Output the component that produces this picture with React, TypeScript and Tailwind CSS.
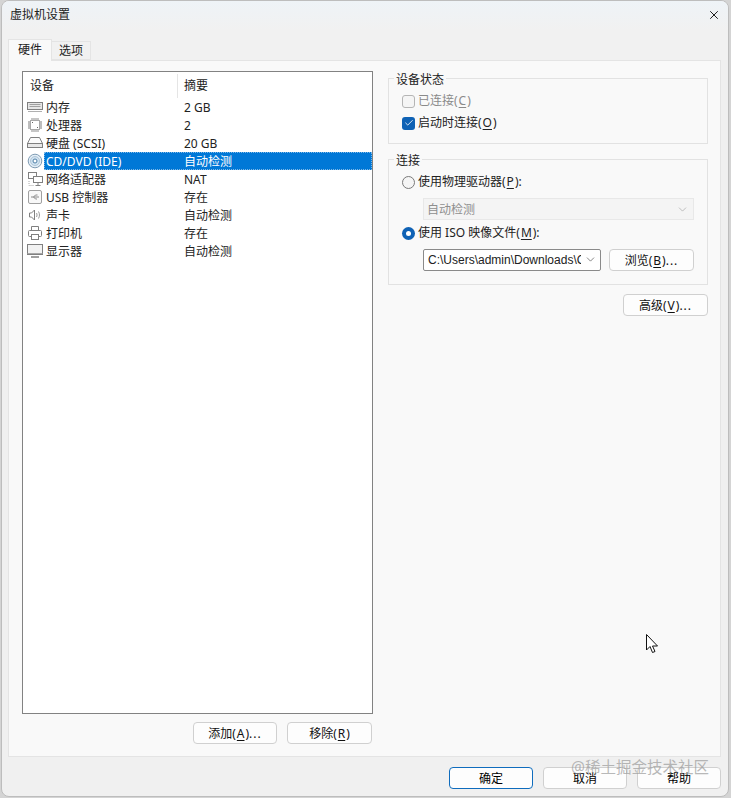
import { ChevronDown, Check, X } from "lucide-react";
import type { ReactNode } from "react";

const FONT = "font-['Noto_Sans','Noto_Sans_CJK_SC','Liberation_Sans',sans-serif]";

const devices = [
  { icon: "memory", name: "内存", summary: "2 GB" },
  { icon: "cpu", name: "处理器", summary: "2" },
  { icon: "disk", name: "硬盘 (SCSI)", summary: "20 GB" },
  { icon: "cd", name: "CD/DVD (IDE)", summary: "自动检测" },
  { icon: "network", name: "网络适配器", summary: "NAT" },
  { icon: "usb", name: "USB 控制器", summary: "存在" },
  { icon: "sound", name: "声卡", summary: "自动检测" },
  { icon: "printer", name: "打印机", summary: "存在" },
  { icon: "display", name: "显示器", summary: "自动检测" },
];

function DeviceIcon({ kind }: { kind: string }) {
  return (
    <svg width="16" height="16" viewBox="0 0 16 16" fill="none" stroke="#808080" strokeWidth="1">
      {kind === "memory" && (
        <>
          <rect x="0.500" y="3.500" width="15" height="7" fill="#e6e6e6" />
          <path d="M2.500 5.500h11M2.500 7.500h11" stroke="#a0a0a0" />
          <path d="M1 12.500h14" stroke="#b0b0b0" />
        </>
      )}
      {kind === "cpu" && (
        <>
          <rect x="3.500" y="3.500" width="9" height="9" fill="#fff" stroke="#a8a8a8" />
          <path d="M5 5.500h1M10 10.500h1" stroke="#666" />
          <path d="M1 5h2M1 7h2M1 9h2M1 11h2M13 5h2M13 7h2M13 9h2M13 11h2M5 1v2M7 1v2M9 1v2M11 1v2M5 13v2M7 13v2M9 13v2M11 13v2" stroke="#a8a8a8" strokeWidth="1.300" />
        </>
      )}
      {kind === "disk" && (
        <>
          <path d="M3.500 2.500h9l3 6H0.500z" fill="#fbfbfb" />
          <rect x="0.500" y="8.500" width="15" height="4" fill="#e8e8e8" />
        </>
      )}
      {kind === "cd" && (
        <>
          <circle cx="8" cy="8" r="6.800" fill="#e4eef6" stroke="#7f9bb3" />
          <circle cx="8" cy="8" r="4.500" fill="#cfe2f1" stroke="#b0c6d8" />
          <circle cx="8" cy="8" r="2" fill="#fff" stroke="#4f7fa6" />
        </>
      )}
      {kind === "network" && (
        <>
          <path d="M2 10v4.500h5" stroke="#a8a8a8" strokeDasharray="1 1" />
          <rect x="1.500" y="1.500" width="8" height="6" fill="#fff" />
          <rect x="6.500" y="5.500" width="9" height="6" fill="#fff" />
          <path d="M11 12v2M8.500 14.500h5" />
        </>
      )}
      {kind === "usb" && (
        <>
          <rect x="1.500" y="1.500" width="13" height="13" rx="1.500" fill="#f8f8f8" stroke="#a0a0a0" />
          <path d="M4 8h8M6.500 8l2-2h2M6.500 8l2 2h1.500" stroke="#8a8a8a" />
        </>
      )}
      {kind === "sound" && (
        <>
          <path d="M2.500 6v4h2l3 3V3l-3 3z" fill="#fff" />
          <path d="M9.500 6c.7 1.300.7 2.700 0 4M11.500 4.500c1.300 2.300 1.300 4.700 0 7" stroke="#9a9a9a" />
        </>
      )}
      {kind === "printer" && (
        <>
          <path d="M4.500 5V1.500h7V5" />
          <rect x="1.500" y="5.500" width="13" height="6" rx="1" fill="#fff" />
          <rect x="4.500" y="9.500" width="7" height="5" fill="#fff" />
        </>
      )}
      {kind === "display" && (
        <>
          <rect x="0.500" y="1.500" width="15" height="10" fill="#f2f2f2" />
          <path d="M0.500 10.500h15" stroke="#a8a8a8" />
          <path d="M4 14h8" strokeWidth="1.500" />
        </>
      )}
    </svg>
  );
}

function Button({ children, primary, className }: { children: ReactNode; primary?: boolean; className?: string }) {
  return (
    <button
      className={`flex h-[22px] items-center justify-center rounded-[4px] border bg-[#fdfdfd] pt-[2px] text-[12px] text-[#111] ${
        primary ? "border-[#0f6cbd]" : "border-[#d0d0d0]"
      } ${className ?? ""}`}
    >
      <span>{children}</span>
    </button>
  );
}

function Group({ title, className, children }: { title: string; className: string; children: ReactNode }) {
  return (
    <div className={`relative border border-[#e2e2e2] ${className}`}>
      <span className="absolute left-[5px] top-[-8px] bg-[#f9f9f9] px-[2px] text-[12px] leading-[18px] text-[#222]">{title}</span>
      {children}
    </div>
  );
}

function Key({ children }: { children: string }) {
  return <span className="mx-px underline underline-offset-2">{children}</span>;
}

function Dots() {
  return <span className="tracking-[1px]">...</span>;
}

export default function App() {
  return (
    <div className="flex h-[798px] w-[731px] bg-[#d4d4d4] pb-px pl-px pr-[2px]">
      <div className={`${FONT} relative flex flex-1 flex-col overflow-hidden rounded-lg border border-[#bdbdbd] bg-[#f0f0f0]`}>
        <div className="flex h-[29px] shrink-0 items-center justify-between bg-gradient-to-b from-[#eef3f7] to-[#f1f1f1] pb-[2px] pl-[8px] pr-[7px]">
          <span className="text-[12px] text-[#222]">虚拟机设置</span>
          <X size={14} strokeWidth={1.500} className="text-black" />
        </div>

        <div className="flex h-[30px] shrink-0 items-end bg-[#f1f1f1] pl-[6px]">
          <div className="z-10 mb-[-1px] flex h-[22px] w-[44px] items-center justify-center border border-b-0 border-[#e4e4e4] bg-[#f9f9f9] pb-[2px] text-[12px] text-[#222]">
            硬件
          </div>
          <div className="flex h-[19px] w-[39px] items-center justify-center border border-l-0 border-[#e4e4e4] pt-px text-[12px] text-[#222]">
            选项
          </div>
        </div>

        <div className="ml-[6px] mr-[7px] flex h-[697px] shrink-0 gap-[15px] border border-[#e4e4e4] bg-[#f9f9f9] pl-[13px] pt-[10px]">
          <div className="flex w-[351px] shrink-0 flex-col">
            <div className="h-[643px] border border-[#828282] bg-white">
              <div className="flex h-[26px] pt-[2px] text-[12px] text-[#222]">
                <div className="flex w-[155px] items-center border-r border-[#e5e5e5] pl-[7px]">设备</div>
                <div className="flex items-center pl-[6px]">摘要</div>
              </div>
              {devices.map((d) => {
                const selected = d.icon === "cd";
                return (
                  <div key={d.icon} className="flex h-[18px] items-center text-[12px] text-[#222]">
                    <div className="flex w-[21px] shrink-0 justify-end pr-px">
                      <DeviceIcon kind={d.icon} />
                    </div>
                    <div
                      className={`flex h-[18px] flex-1 items-center pl-[2px] pt-[2px] ${
                        selected ? "bg-[#0078d7] text-white outline-1 -outline-offset-1 outline-dotted outline-[#7fb8e6]" : ""
                      }`}
                    >
                      <span className="w-[138px]">{d.name}</span>
                      <span>{d.summary}</span>
                    </div>
                  </div>
                );
              })}
            </div>
            <div className="mt-[8px] flex justify-end gap-[10px] pr-px">
              <Button className="w-[84px]">
                添加(<Key>A</Key>)<Dots />
              </Button>
              <Button className="w-[85px]">
                移除(<Key>R</Key>)
              </Button>
            </div>
          </div>

          <div className="flex w-[320px] shrink-0 flex-col pt-[7px] text-[12px] text-[#222]">
            <Group title="设备状态" className="h-[66px]">
              <div className="flex flex-col gap-[4px] pl-[13px] pt-[13px]">
                <label className="flex h-[18px] items-center gap-[3px] text-[#8a8a8a]">
                  <span className="h-[13px] w-[13px] rounded-[3px] border border-[#b5b5b5] bg-[#f5f5f5]" />
                  <span>
                    已连接(<Key>C</Key>)
                  </span>
                </label>
                <label className="flex h-[18px] items-center gap-[3px]">
                  <span className="flex h-[13px] w-[13px] items-center justify-center rounded-[3px] bg-[#0f62b5]">
                    <Check size={10} strokeWidth={2} className="text-white" />
                  </span>
                  <span>
                    启动时连接(<Key>O</Key>)
                  </span>
                </label>
              </div>
            </Group>

            <Group title="连接" className="mt-[15px] h-[126px]">
              <div className="pl-[13px] pt-[13px]">
                <label className="flex h-[18px] items-center gap-[3px]">
                  <span className="h-[13px] w-[13px] rounded-full border border-[#7a7a7a] bg-[#f5f5f5]" />
                  <span>
                    使用物理驱动器(<Key>P</Key>):
                  </span>
                </label>
                <div className="ml-[21px] mt-[7px] flex h-[22px] w-[271px] items-center justify-between border border-[#e8e8e8] bg-[#f4f4f4] pl-[3px] pr-[4px] text-[#8f8f8f]">
                  <span className="pt-[2px]">自动检测</span>
                  <ChevronDown size={13} strokeWidth={1} />
                </div>
                <label className="mt-[4px] flex h-[18px] items-center gap-[3px]">
                  <span className="flex h-[13px] w-[13px] items-center justify-center rounded-full bg-[#0f62b5]">
                    <span className="h-[5px] w-[5px] rounded-full bg-white" />
                  </span>
                  <span>
                    使用 ISO 映像文件(<Key>M</Key>):
                  </span>
                </label>
                <div className="ml-[21px] mt-[6px] flex items-center gap-[8px]">
                  <div className="flex h-[22px] w-[178px] items-center justify-between rounded-[2px] border border-[#8a8a8a] bg-white pl-[4px] pr-[3px] font-['Liberation_Sans',sans-serif] text-[#222]">
                    <span className="w-[153px] overflow-hidden whitespace-nowrap">C:\Users\admin\Downloads\CentOS</span>
                    <ChevronDown size={13} strokeWidth={1} />
                  </div>
                  <Button className="mt-px w-[85px]">
                    浏览(<Key>B</Key>)<Dots />
                  </Button>
                </div>
              </div>
            </Group>

            <div className="mt-[9px] flex justify-end">
              <Button className="w-[85px]">
                高级(<Key>V</Key>)<Dots />
              </Button>
            </div>
          </div>
        </div>

        <div className="relative flex flex-1 items-start justify-end gap-[10px] pr-[7px] pt-[10px]">
          <Button primary className="w-[84px] text-black">
            确定
          </Button>
          <Button className="w-[84px] text-black">取消</Button>
          <Button className="w-[84px] text-black">帮助</Button>
          <span className="absolute right-[19px] top-[-1px] text-[15.500px] leading-[22px] text-[#9a9a9a]/70">@稀土掘金技术社区</span>
        </div>

        <svg className="absolute left-[643px] top-[632px]" width="14" height="22" viewBox="0 0 14 22" fill="#fff" stroke="#111" strokeWidth="1">
          <path d="M1.500 1.500V17l3.500-3.500 2.500 6 2.500-1-2.500-5.500h5z" />
        </svg>
      </div>
    </div>
  );
}
